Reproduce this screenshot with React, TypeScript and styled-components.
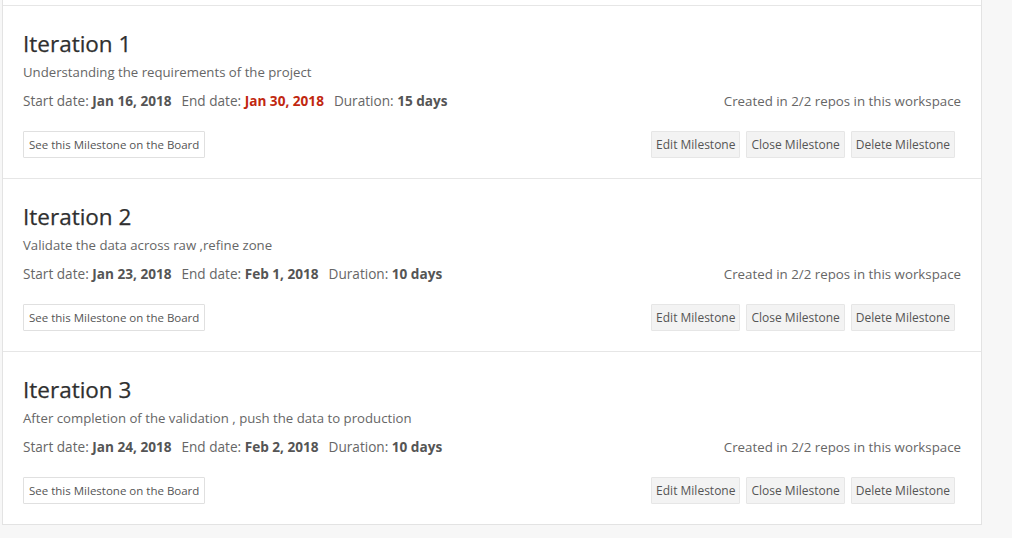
import React from "react";
import styled, { createGlobalStyle } from "styled-components";

const Global = createGlobalStyle`
  html, body { margin: 0; padding: 0; background: #f7f7f7; }
  body { font-family: "Open Sans", "Noto Sans", sans-serif; color: #666; }
`;

const Page = styled.div`
  padding: 0 30px 14px 2px;
  margin-top: -20px;
`;

const Card = styled.div`
  background: #fff;
  border: 1px solid #e3e3e3;
`;

const Section = styled.section`
  border-top: 1px solid #e6e6e6;
  padding: 23px 20px 0 20px;
  height: 173px;
  box-sizing: border-box;
  &:first-child { border-top: none; height: 24px; padding: 0; }
`;

const Title = styled.h2`
  margin: 0;
  font-size: 22.5px;
  line-height: 30px;
  font-weight: 400;
  color: #2f2f2f;
  -webkit-text-stroke: 0.25px #2f2f2f;
`;

const Desc = styled.p`
  margin: 4px 0 0;
  font-size: 13.2px;
  line-height: 18px;
  color: #666;
`;

const MetaRow = styled.div`
  display: flex;
  justify-content: space-between;
  align-items: center;
  margin-top: 11px;
  font-size: 13.6px;
  line-height: 18px;
  color: #666;
`;

const Dates = styled.div`
  display: flex;
  gap: 10px;
`;

const Strong = styled.b<{ $red?: boolean }>`
  font-weight: 700;
  color: ${(p) => (p.$red ? "#c1270f" : "#555")};
`;

const Repos = styled.span`
  font-size: 13.3px;
`;

const Actions = styled.div`
  display: flex;
  justify-content: space-between;
  margin-top: 21px;
  padding-right: 6px;
`;

const Group = styled.div`
  display: flex;
  gap: 6px;
`;

const Button = styled.button<{ $ghost?: boolean }>`
  font-family: inherit;
  font-size: ${(p) => (p.$ghost ? "11.5px" : "12px")};
  height: 27px;
  padding: 0 ${(p) => (p.$ghost ? "5px" : "4px")};
  color: #555;
  background: ${(p) => (p.$ghost ? "#fff" : "#f3f3f3")};
  border: 1px solid ${(p) => (p.$ghost ? "#e0e0e0" : "#e6e6e6")};
  border-radius: 1px;
  cursor: pointer;
`;

type M = { title: string; desc: string; start: string; end: string; dur: string; late?: boolean };

const items: M[] = [
  { title: "Iteration 1", desc: "Understanding the requirements of the project", start: "Jan 16, 2018", end: "Jan 30, 2018", dur: "15 days", late: true },
  { title: "Iteration 2", desc: "Validate the data across raw ,refine zone", start: "Jan 23, 2018", end: "Feb 1, 2018", dur: "10 days" },
  { title: "Iteration 3", desc: "After completion of the validation , push the data to production", start: "Jan 24, 2018", end: "Feb 2, 2018", dur: "10 days" },
];

export default function App() {
  return (
    <>
      <Global />
      <Page>
        <Card>
          <Section />
          {items.map((m) => (
            <Section key={m.title}>
              <Title>{m.title}</Title>
              <Desc>{m.desc}</Desc>
              <MetaRow>
                <Dates>
                  <span>Start date: <Strong>{m.start}</Strong></span>
                  <span>End date: <Strong $red={m.late}>{m.end}</Strong></span>
                  <span>Duration: <Strong>{m.dur}</Strong></span>
                </Dates>
                <Repos>Created in 2/2 repos in this workspace</Repos>
              </MetaRow>
              <Actions>
                <Button $ghost>See this Milestone on the Board</Button>
                <Group>
                  <Button>Edit Milestone</Button>
                  <Button>Close Milestone</Button>
                  <Button>Delete Milestone</Button>
                </Group>
              </Actions>
            </Section>
          ))}
        </Card>
      </Page>
    </>
  );
}
